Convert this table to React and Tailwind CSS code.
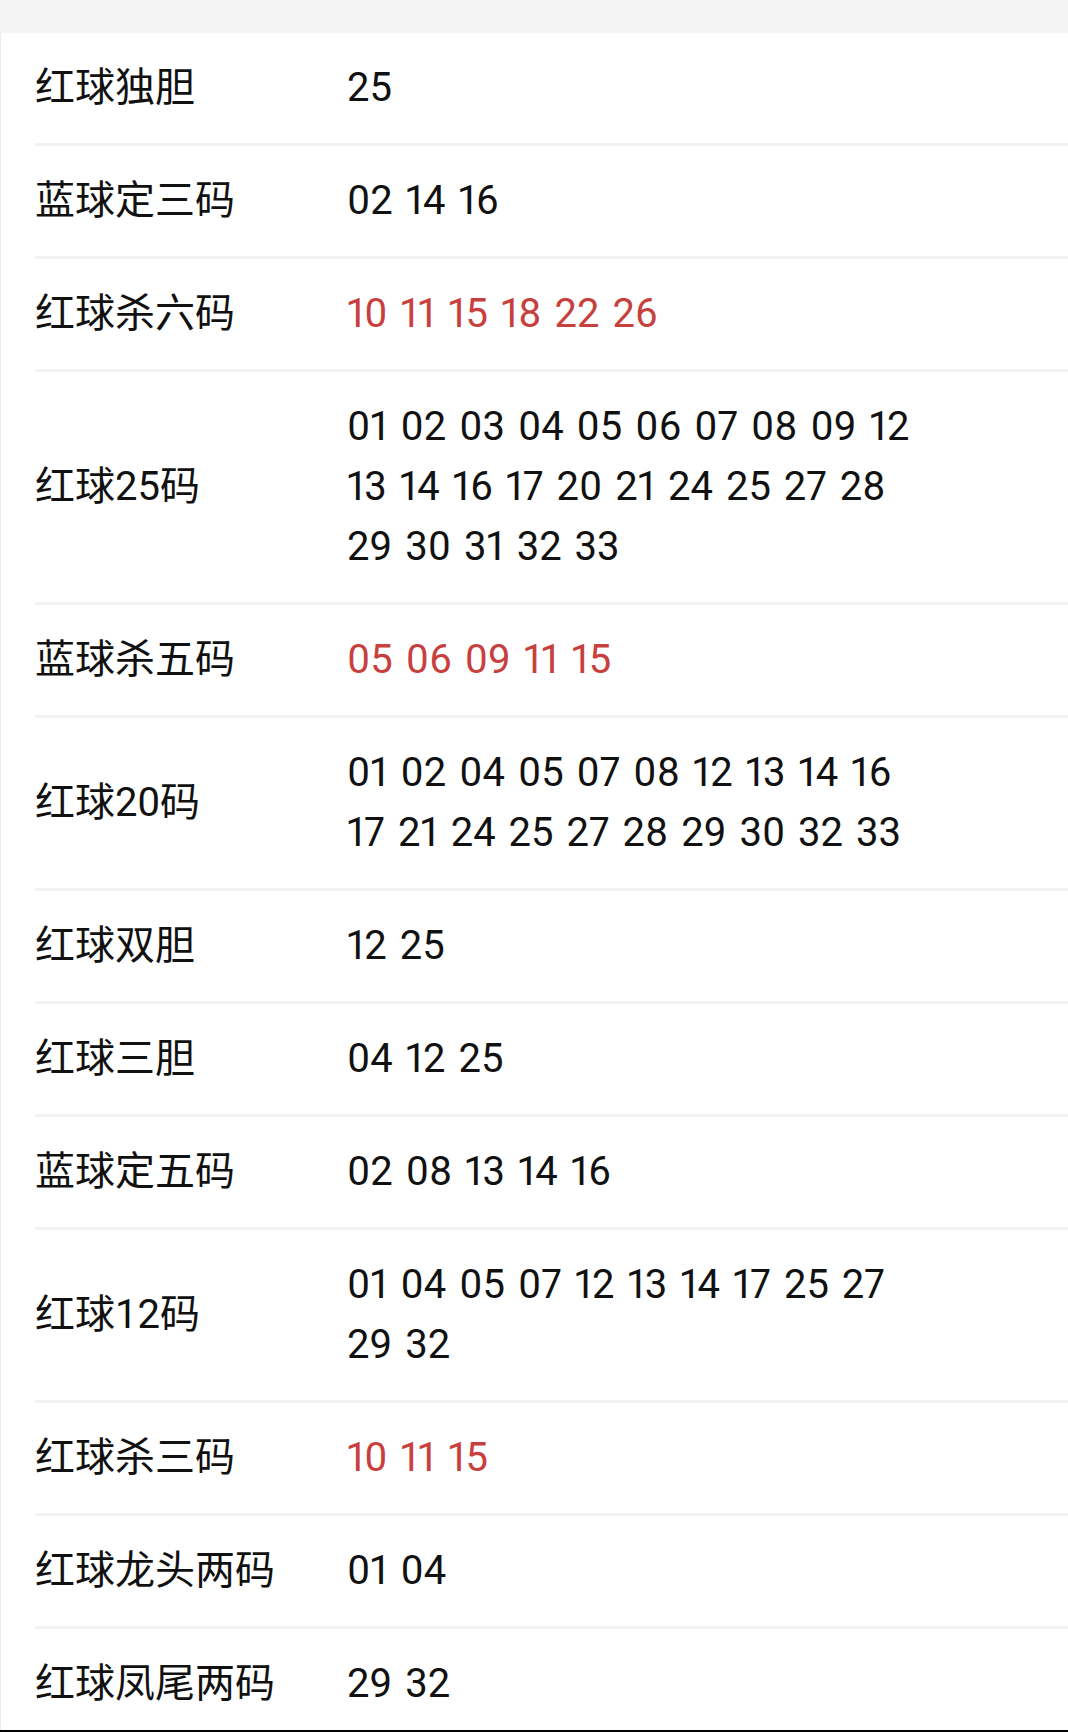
const rows = [
  { label: "红球独胆", lines: ["25"] },
  { label: "蓝球定三码", lines: ["02 14 16"] },
  { label: "红球杀六码", lines: ["10 11 15 18 22 26"], red: true },
  {
    label: "红球25码",
    lines: [
      "01 02 03 04 05 06 07 08 09 12",
      "13 14 16 17 20 21 24 25 27 28",
      "29 30 31 32 33",
    ],
  },
  { label: "蓝球杀五码", lines: ["05 06 09 11 15"], red: true },
  {
    label: "红球20码",
    lines: ["01 02 04 05 07 08 12 13 14 16", "17 21 24 25 27 28 29 30 32 33"],
  },
  { label: "红球双胆", lines: ["12 25"] },
  { label: "红球三胆", lines: ["04 12 25"] },
  { label: "蓝球定五码", lines: ["02 08 13 14 16"] },
  { label: "红球12码", lines: ["01 04 05 07 12 13 14 17 25 27", "29 32"] },
  { label: "红球杀三码", lines: ["10 11 15"], red: true },
  { label: "红球龙头两码", lines: ["01 04"] },
  { label: "红球凤尾两码", lines: ["29 32"] },
];

function Row({ label, lines, red }) {
  return (
    <div className="ml-[34px] flex items-center border-b-[3px] border-[#f2f2f2] py-[25px]">
      <div className="w-[312px] shrink-0 text-[40px] leading-[60px] text-[#111]">
        {label}
      </div>
      <div
        className={
          "text-[40px] leading-[60px] proportional-nums [word-spacing:3px] " +
          (red ? "text-[#c8403e]" : "text-[#111]")
        }
      >
        {lines.map((line, i) => (
          <div key={i} className="whitespace-nowrap">
            {line}
          </div>
        ))}
      </div>
    </div>
  );
}

export default function App() {
  return (
    <div
      className="flex h-[1732px] w-[1068px] flex-col overflow-hidden bg-white"
      style={{ fontFamily: "Roboto, 'Noto Sans CJK SC', sans-serif" }}
    >
      <div className="h-[33px] shrink-0 bg-[#f4f4f4]" />
      <div className="min-h-0 flex-1 overflow-hidden border-l border-[#ececec]">
        {rows.map((r) => (
          <Row key={r.label} {...r} />
        ))}
      </div>
      <div className="h-[2px] shrink-0 bg-black" />
    </div>
  );
}
